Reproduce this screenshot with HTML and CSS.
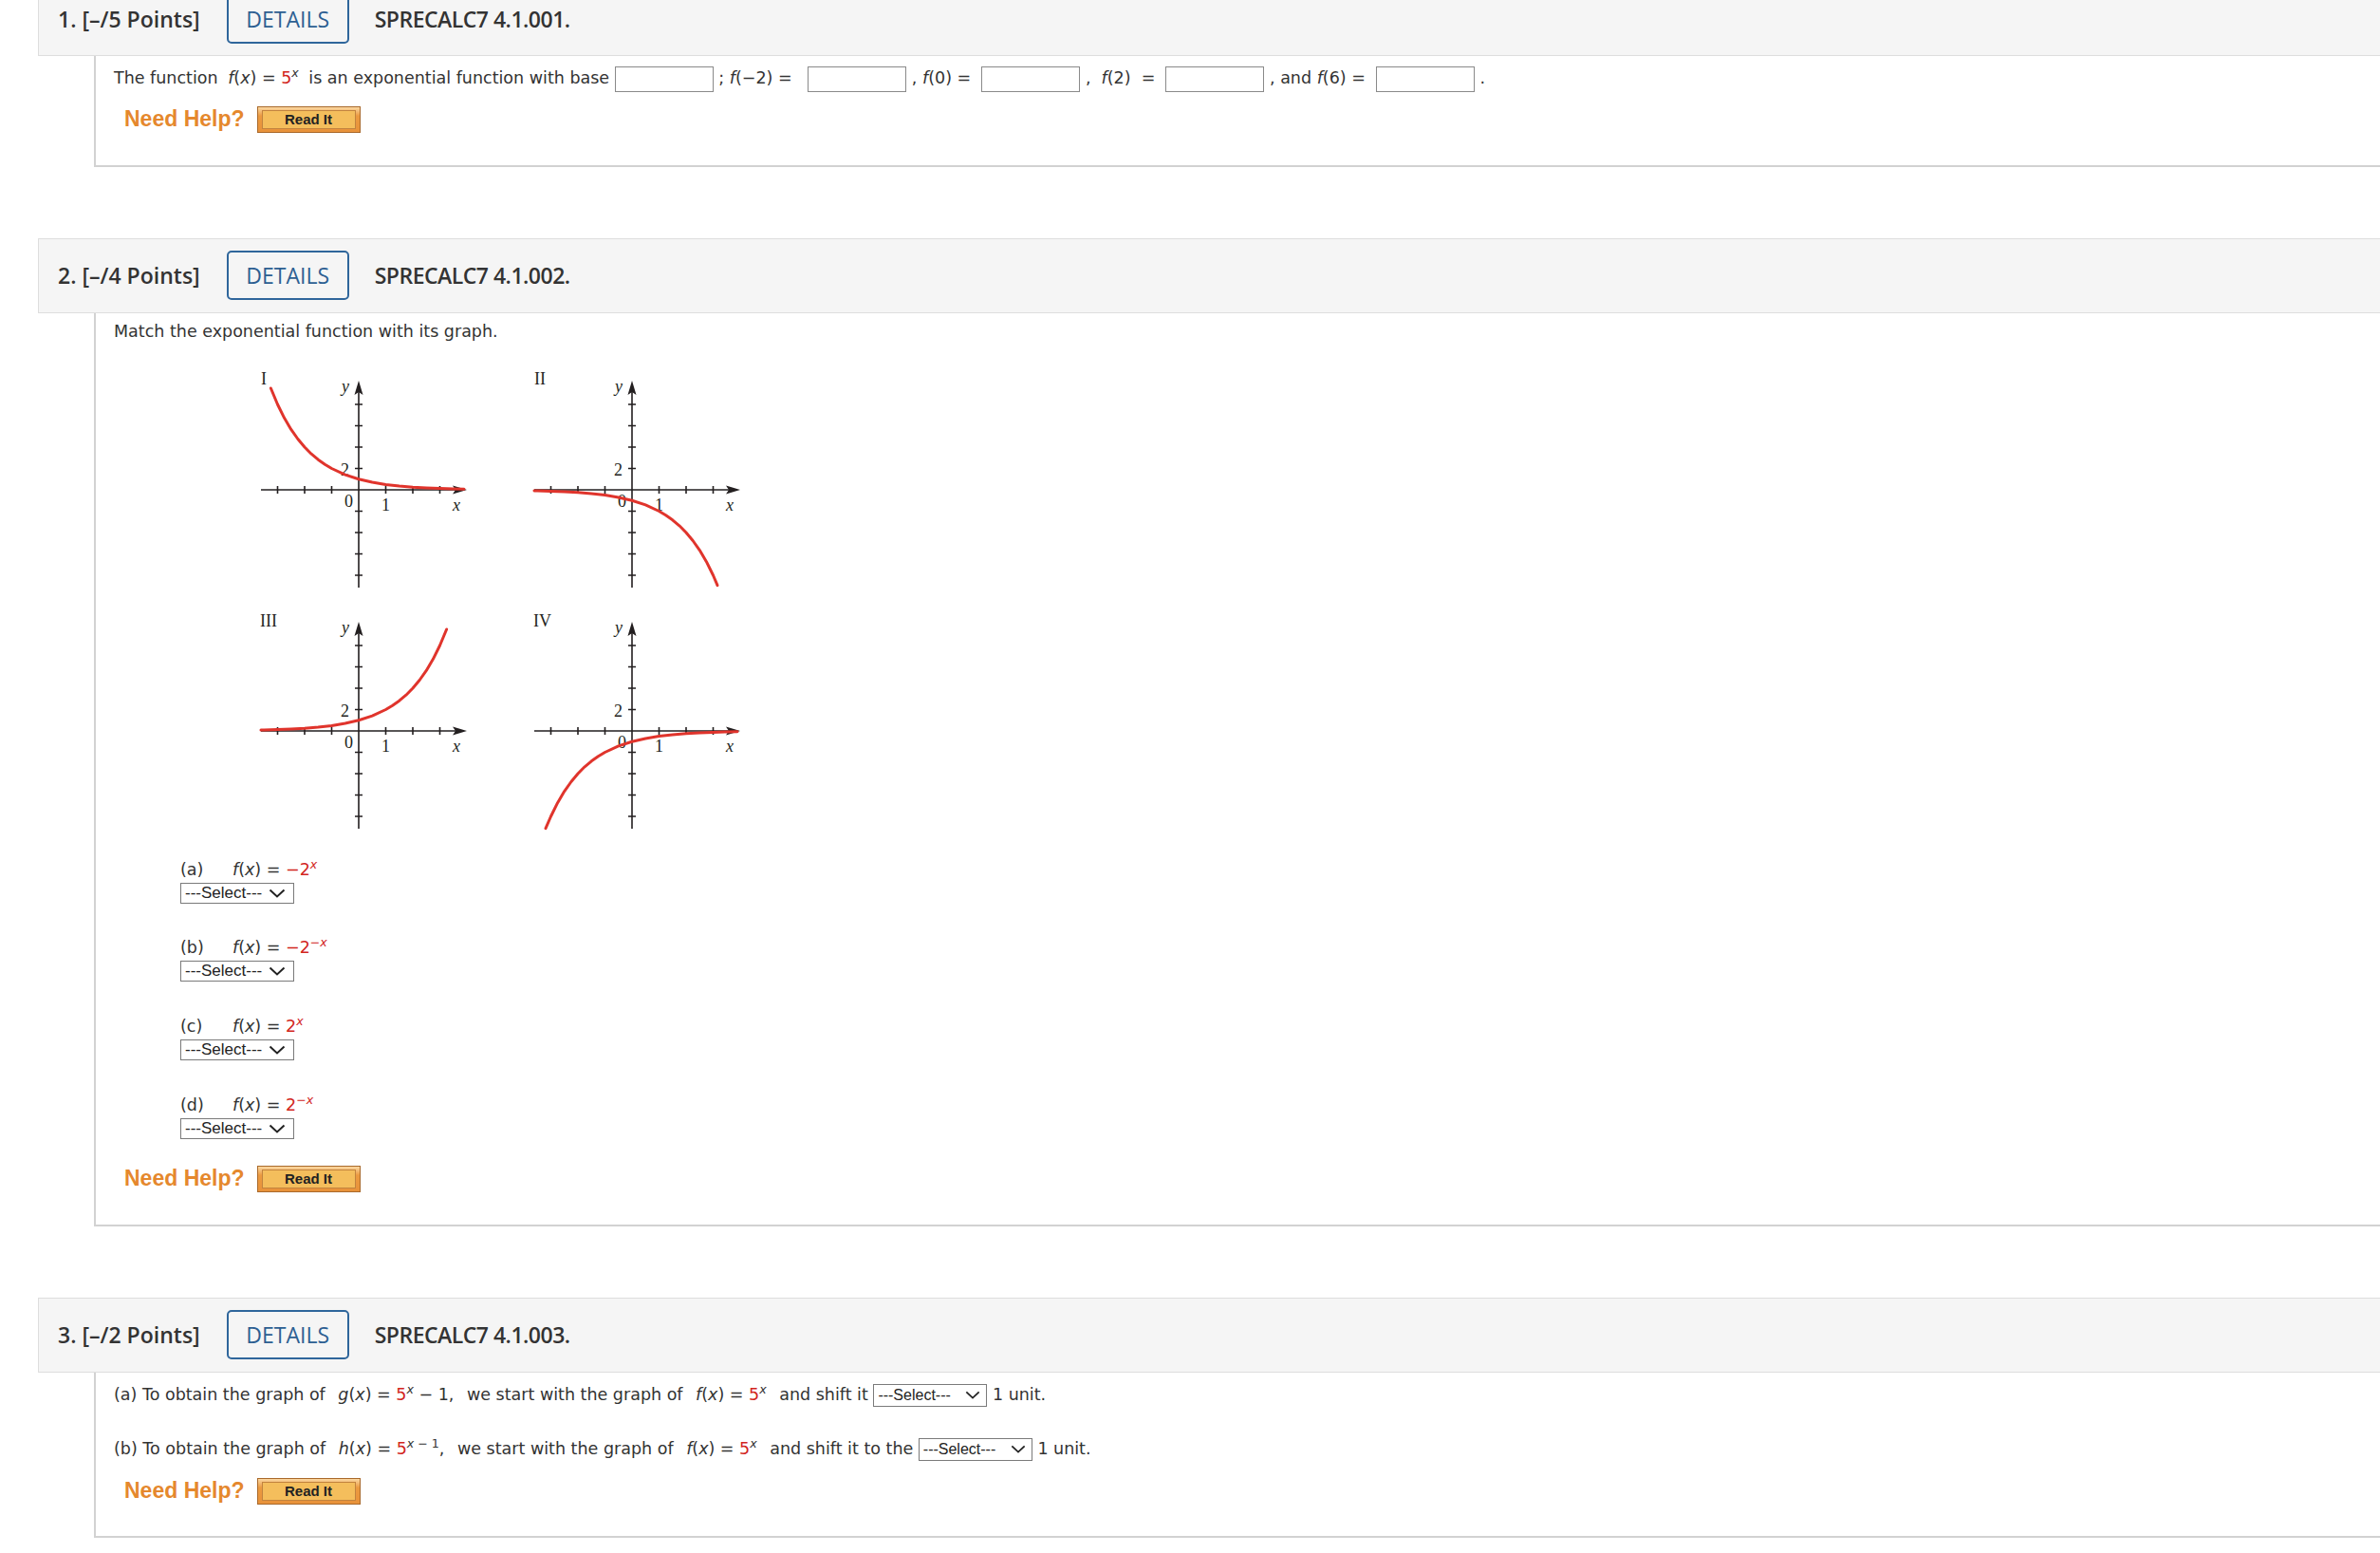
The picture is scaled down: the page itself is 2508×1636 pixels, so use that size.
FILE: index.html
```html
<!DOCTYPE html>
<html lang="en">
<head>
    <meta charset="UTF-8">
    <title>SPRECALC7 4.1 Exponential Functions</title>
    <link rel="stylesheet" href="styles.css">
</head>
<body>
    <!-- shared axes for the four graphs -->
    <svg class="defs" width="0" height="0">
        <symbol id="axes" viewBox="0 0 240 232">
            <path class="axis" d="M5 125H212 M108 228V20 M22.5 121v8 M51 121v8 M79.5 121v8 M136.5 121v8 M165 121v8 M193.5 121v8 M104 35h8 M104 57.5h8 M104 80h8 M104 102.5h8 M104 147.5h8 M104 170h8 M104 192.5h8 M104 215h8"/>
            <path class="arrow" d="M222 125L207 120.5L210 125L207 129.5Z M108 10L103.5 25L108 22L112.5 25Z"/>
            <text class="it" x="90" y="22">y</text>
            <text x="89" y="110">2</text>
            <text x="93" y="143">0</text>
            <text x="132" y="147">1</text>
            <text class="it" x="207" y="147">x</text>
        </symbol>
    </svg>

    <div class="page">

        <!-- question 1 -->
        <section class="question">
            <div class="q-head">
                <span class="q-num">1. [–/5 Points]</span>
                <span class="details">DETAILS</span>
                <span class="q-code">SPRECALC7 4.1.001.</span>
            </div>
            <div class="q-body q1">
                <p class="prompt">The function <span class="math"><i>f</i>(<i>x</i>) = <span class="red">5</span><sup><i>x</i></sup></span> is an exponential function with base <input class="blank" type="text"> ; <i>f</i>(−2) =&nbsp;&nbsp; <input class="blank" type="text"> , <i>f</i>(0) =&nbsp; <input class="blank" type="text"> , &nbsp;<i>f</i>(2) &nbsp;=&nbsp; <input class="blank" type="text"> , and <i>f</i>(6) =&nbsp; <input class="blank" type="text"> .</p>
                <div class="help">
                    <span class="need-help">Need Help?</span>
                    <button class="read-it"><span>Read It</span></button>
                </div>
            </div>
        </section>

        <!-- question 2 -->
        <section class="question">
            <div class="q-head">
                <span class="q-num">2. [–/4 Points]</span>
                <span class="details">DETAILS</span>
                <span class="q-code">SPRECALC7 4.1.002.</span>
            </div>
            <div class="q-body q2">
                <p class="prompt">Match the exponential function with its graph.</p>

                <div class="graphs">
                    <svg class="graph" width="240" height="232" viewBox="0 0 240 232">
                        <use href="#axes"/>
                        <text class="roman" x="5" y="14">I</text>
                        <polyline class="curve" points="15.4,18 22.5,35 29.6,49.3 36.75,61.4 43.9,71.5 51,80 58.1,87.2 65.25,93.2 72.4,98.2 79.5,102.5 93.75,109.1 108,113.75 122.25,117.05 136.5,119.4 150.75,121 165,122.2 179.25,123 193.5,123.6 207.75,124 219,124.2"/>
                    </svg>
                    <svg class="graph" width="240" height="232" viewBox="0 0 240 232">
                        <use href="#axes"/>
                        <text class="roman" x="5" y="14">II</text>
                        <polyline class="curve" points="5,125.9 8.25,126 22.5,126.4 36.75,127 51,127.8 65.25,129 79.5,130.6 93.75,132.95 108,136.25 122.25,140.9 136.5,147.5 143.6,151.8 150.75,156.8 157.9,162.8 165,170 172.1,178.5 179.25,188.6 186.4,200.7 193.5,215 198,225.6"/>
                    </svg>
                    <svg class="graph" width="240" height="232" viewBox="0 0 240 232">
                        <use href="#axes"/>
                        <text class="roman" x="4" y="15">III</text>
                        <polyline class="curve" points="5,124.1 8.25,124 22.5,123.6 36.75,123 51,122.2 65.25,121 79.5,119.4 93.75,117.05 108,113.75 122.25,109.1 136.5,102.5 143.6,98.2 150.75,93.2 157.9,87.2 165,80 172.1,71.5 179.25,61.4 186.4,49.3 193.5,35 200.6,18"/>
                    </svg>
                    <svg class="graph" width="240" height="232" viewBox="0 0 240 232">
                        <use href="#axes"/>
                        <text class="roman" x="4" y="15">IV</text>
                        <polyline class="curve" points="17,227.7 22.5,215 29.6,200.7 36.75,188.6 43.9,178.5 51,170 58.1,162.8 65.25,156.8 72.4,151.8 79.5,147.5 93.75,140.9 108,136.25 122.25,132.95 136.5,130.6 150.75,129 165,127.8 179.25,127 193.5,126.4 207.75,126 219,125.8"/>
                    </svg>
                </div>

                <div class="parts">
                    <div class="part">
                        <div class="part-label"><span class="letter">(a)</span><i>f</i>(<i>x</i>) = <span class="red">−2<sup><i>x</i></sup></span></div>
                        <span class="select">---Select--- <svg width="18" height="10" viewBox="0 0 18 10"><path d="M1.5 1.5L9 8.5L16.5 1.5"/></svg></span>
                    </div>
                    <div class="part">
                        <div class="part-label"><span class="letter">(b)</span><i>f</i>(<i>x</i>) = <span class="red">−2<sup>−<i>x</i></sup></span></div>
                        <span class="select">---Select--- <svg width="18" height="10" viewBox="0 0 18 10"><path d="M1.5 1.5L9 8.5L16.5 1.5"/></svg></span>
                    </div>
                    <div class="part">
                        <div class="part-label"><span class="letter">(c)</span><i>f</i>(<i>x</i>) = <span class="red">2<sup><i>x</i></sup></span></div>
                        <span class="select">---Select--- <svg width="18" height="10" viewBox="0 0 18 10"><path d="M1.5 1.5L9 8.5L16.5 1.5"/></svg></span>
                    </div>
                    <div class="part">
                        <div class="part-label"><span class="letter">(d)</span><i>f</i>(<i>x</i>) = <span class="red">2<sup>−<i>x</i></sup></span></div>
                        <span class="select">---Select--- <svg width="18" height="10" viewBox="0 0 18 10"><path d="M1.5 1.5L9 8.5L16.5 1.5"/></svg></span>
                    </div>
                </div>

                <div class="help">
                    <span class="need-help">Need Help?</span>
                    <button class="read-it"><span>Read It</span></button>
                </div>
            </div>
        </section>

        <!-- question 3 -->
        <section class="question">
            <div class="q-head">
                <span class="q-num">3. [–/2 Points]</span>
                <span class="details">DETAILS</span>
                <span class="q-code">SPRECALC7 4.1.003.</span>
            </div>
            <div class="q-body q3">
                <p class="prompt">(a) To obtain the graph of <span class="math"><i>g</i>(<i>x</i>) = <span class="red">5</span><sup><i>x</i></sup> − 1,</span> we start with the graph of <span class="math"><i>f</i>(<i>x</i>) = <span class="red">5</span><sup><i>x</i></sup></span> and shift it <span class="select small">---Select--- <svg width="16" height="9" viewBox="0 0 18 10"><path d="M1.5 1.5L9 8.5L16.5 1.5"/></svg></span> 1 unit.</p>
                <p class="prompt">(b) To obtain the graph of <span class="math"><i>h</i>(<i>x</i>) = <span class="red">5</span><sup><i>x</i> − 1</sup>,</span> we start with the graph of <span class="math"><i>f</i>(<i>x</i>) = <span class="red">5</span><sup><i>x</i></sup></span> and shift it to the&nbsp;<span class="select small">---Select--- <svg width="16" height="9" viewBox="0 0 18 10"><path d="M1.5 1.5L9 8.5L16.5 1.5"/></svg></span> 1 unit.</p>
                <div class="help">
                    <span class="need-help">Need Help?</span>
                    <button class="read-it"><span>Read It</span></button>
                </div>
            </div>
        </section>

    </div>
</body>
</html>
```

FILE: styles.css
```css
body {
    margin: 0;
    font-family: "DejaVu Sans", Verdana, sans-serif;
    font-size: 17.5px;
    color: #333;
    background: #fff;
}

.defs {
    position: absolute;
    width: 0;
    height: 0;
}

.page {
    margin-top: -20px;
    padding-left: 40px;
}

.question {
    margin-bottom: 75px;
}

/* header bar */
.q-head {
    display: flex;
    align-items: center;
    height: 77px;
    padding-left: 20px;
    background: #f5f5f5;
    border: 1px solid #dedede;
    border-right: none;
    font-family: "Open Sans", sans-serif;
    font-size: 23px;
    font-weight: 600;
    color: #333;
}

.details {
    box-sizing: border-box;
    display: flex;
    align-items: center;
    justify-content: center;
    width: 129px;
    height: 52px;
    margin: 0 27px 0 28px;
    border: 2px solid #2f669b;
    border-radius: 5px;
    color: #2d5f92;
    font-weight: 500;
}

.q-code {
    letter-spacing: -0.5px;
}

/* question body */
.q-body {
    margin-left: 59px;
    border-left: 2px solid #d2d2d2;
    border-bottom: 2px solid #d2d2d2;
    padding: 10px 0 34px 19px;
}

.prompt {
    margin: 0;
    line-height: 27px;
}

.q1 .help {
    margin-top: 15px;
}

.q2 {
    padding-top: 7px;
}

.q2 .prompt {
    line-height: 24px;
}

.q3 {
    padding-top: 11px;
    padding-bottom: 33px;
}

.q3 .prompt {
    line-height: 24px;
}

.q3 .prompt + .prompt {
    margin-top: 32px;
}

.math {
    margin: 0 5px;
}

.q3 .math {
    margin: 0 8px;
}

.red {
    color: #d2261e;
}

sup {
    font-size: 0.72em;
    line-height: 0;
    vertical-align: 0.55em;
}

.blank {
    box-sizing: border-box;
    width: 104px;
    height: 27px;
    margin: 0;
    border: 1px solid #8a8a8a;
    vertical-align: middle;
    background: #fff;
}

/* graphs */
.graphs {
    display: grid;
    grid-template-columns: 240px 240px;
    column-gap: 48px;
    row-gap: 22px;
    margin: 30px 0 0 150px;
}

.graph {
    display: block;
}

svg text {
    font-family: "Liberation Serif", "Times New Roman", serif;
    font-size: 18px;
    fill: #231f20;
}

svg text.it {
    font-style: italic;
}

.axis {
    fill: none;
    stroke: #231f20;
    stroke-width: 1.6;
}

.arrow {
    fill: #231f20;
}

.curve {
    fill: none;
    stroke: #e0342c;
    stroke-width: 3;
    stroke-linecap: round;
    stroke-linejoin: round;
}

/* matching parts */
.parts {
    margin: 27px 0 0 70px;
}

.part + .part {
    margin-top: 34.7px;
}

.part-label {
    line-height: 24px;
    margin-bottom: 2px;
}

.letter {
    display: inline-block;
    width: 55px;
}

.select {
    box-sizing: border-box;
    display: inline-flex;
    align-items: center;
    justify-content: space-between;
    width: 120px;
    height: 22px;
    padding: 0 8px 0 4px;
    border: 1px solid #7a7a7a;
    font-family: "Liberation Sans", Arial, sans-serif;
    font-size: 17px;
    color: #222;
    background: #fff;
    vertical-align: middle;
}

.select svg path {
    fill: none;
    stroke: #222;
    stroke-width: 2;
}

.select.small {
    height: 24px;
    font-size: 16px;
    padding-right: 6px;
}

/* need help */
.help {
    display: flex;
    align-items: center;
    gap: 13px;
    margin: 18px 0 0 11px;
}

.q2 .help {
    margin-top: 28px;
}

.need-help {
    font-family: "Liberation Sans", Arial, sans-serif;
    font-size: 23px;
    font-weight: bold;
    color: #e5882d;
}

.read-it {
    box-sizing: border-box;
    width: 109px;
    height: 28px;
    padding: 3px 4px;
    border: 1px solid #a9692b;
    background: linear-gradient(#fbd7a0, #eb9a40 35%, #e8923a);
    cursor: pointer;
}

.read-it span {
    display: block;
    height: 100%;
    box-sizing: border-box;
    border: 1px solid #c2833e;
    background: #f4be5c;
    font-family: "Liberation Sans", Arial, sans-serif;
    font-size: 15px;
    font-weight: bold;
    line-height: 18px;
    color: #222;
}
```
